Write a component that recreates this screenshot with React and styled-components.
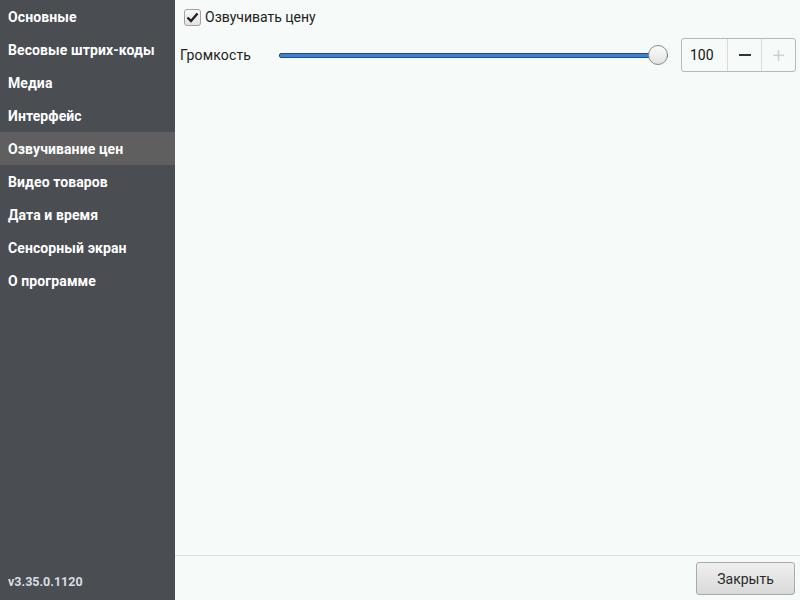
import React from "react";
import styled, { createGlobalStyle } from "styled-components";

const Global = createGlobalStyle`
  html, body { margin: 0; padding: 0; }
  body { font-family: Roboto, "Liberation Sans", sans-serif; }
  #root { width: 800px; height: 600px; }
`;

const Layout = styled.div`
  display: flex;
  width: 800px;
  height: 600px;
  overflow: hidden;
`;

const Sidebar = styled.nav`
  width: 175px;
  flex: none;
  background: #4a4d52;
  display: flex;
  flex-direction: column;
`;

const NavItem = styled.div`
  height: 33px;
  display: flex;
  align-items: center;
  padding-left: 8px;
  color: #ffffff;
  font-weight: 700;
  font-size: 14px;
  letter-spacing: 0.1px;
  background: ${(p) => (p.$active ? "#5f5f5f" : "transparent")};
`;

const Version = styled.div`
  margin-top: auto;
  height: 40px;
  display: flex;
  align-items: center;
  padding-left: 8px;
  padding-top: 2px;
  box-sizing: border-box;
  color: #d8dde2;
  font-weight: 700;
  font-size: 12.5px;
`;

const Main = styled.main`
  flex: 1;
  background: #f6faf8;
  display: flex;
  flex-direction: column;
`;

const Content = styled.div`
  flex: 1;
  padding: 7px 5px 0 5px;
  display: flex;
  flex-direction: column;
`;

const CheckRow = styled.label`
  display: flex;
  align-items: center;
  gap: 4px;
  padding-left: 4px;
  height: 20px;
  font-size: 14px;
  color: #222;
`;

const Box = styled.span`
  width: 15px;
  height: 15px;
  border: 1px solid #a0a0a0;
  border-radius: 3px;
  background: linear-gradient(#fafafa, #e2e2e2);
  display: flex;
  align-items: center;
  justify-content: center;
`;

const VolumeRow = styled.div`
  display: flex;
  align-items: center;
  margin-top: 11px;
  height: 34px;
`;

const Label = styled.span`
  font-size: 14px;
  letter-spacing: 0.15px;
  color: #222;
  width: 99px;
`;

const Slider = styled.div`
  position: relative;
  width: 389px;
  height: 22px;
  display: flex;
  align-items: center;
`;

const Track = styled.div`
  width: 100%;
  height: 3px;
  background: #3d83cf;
  border: 1px solid #1f4f86;
  border-radius: 2px;
`;

const Thumb = styled.div`
  position: absolute;
  right: 0;
  top: 1px;
  width: 18px;
  height: 18px;
  border-radius: 50%;
  border: 1px solid #8a8a8a;
  background: linear-gradient(#fbfbfb, #e2e2e2);
`;

const Spin = styled.div`
  margin-left: 13px;
  display: flex;
  height: 32px;
  border: 1px solid #b8b8b8;
  border-radius: 3px;
  background: #f6faf8;
`;

const SpinValue = styled.div`
  width: 46px;
  display: flex;
  align-items: center;
  padding-left: 8px;
  box-sizing: border-box;
  font-size: 14px;
  color: #111;
  border-right: 1px solid #dcdcdc;
`;

const SpinBtn = styled.div`
  width: 33px;
  display: flex;
  align-items: center;
  justify-content: center;
  border-right: ${(p) => (p.$last ? "none" : "1px solid #dcdcdc")};
`;

const Footer = styled.footer`
  height: 44px;
  border-top: 1px solid #dde0de;
  display: flex;
  align-items: center;
  justify-content: flex-end;
  padding-right: 6px;
`;

const Button = styled.button`
  width: 99px;
  height: 33px;
  border: 1px solid #a9a9a9;
  border-radius: 3px;
  background: linear-gradient(#f0f0f0, #d9d9d9);
  font-family: Roboto, "Liberation Sans", sans-serif;
  font-size: 14px;
  color: #2a2a2a;
  margin-top: 1px;
`;

const items = [
  "Основные",
  "Весовые штрих-коды",
  "Медиа",
  "Интерфейс",
  "Озвучивание цен",
  "Видео товаров",
  "Дата и время",
  "Сенсорный экран",
  "О программе",
];

export default function App() {
  return (
    <>
      <Global />
      <Layout>
        <Sidebar>
          {items.map((t, i) => (
            <NavItem key={t} $active={i === 4}>
              {t}
            </NavItem>
          ))}
          <Version>v3.35.0.1120</Version>
        </Sidebar>
        <Main>
          <Content>
            <CheckRow>
              <Box>
                <svg width="13" height="11" viewBox="0 0 13 11">
                  <path d="M1.5 5.5 L5 9 L11.5 1.5" fill="none" stroke="#222" strokeWidth="2.4" />
                </svg>
              </Box>
              Озвучивать цену
            </CheckRow>
            <VolumeRow>
              <Label>Громкость</Label>
              <Slider>
                <Track />
                <Thumb />
              </Slider>
              <Spin>
                <SpinValue>100</SpinValue>
                <SpinBtn>
                  <svg width="12" height="2" viewBox="0 0 12 2">
                    <rect width="12" height="2" fill="#333" />
                  </svg>
                </SpinBtn>
                <SpinBtn $last>
                  <svg width="11" height="11" viewBox="0 0 11 11">
                    <rect x="0" y="4.5" width="11" height="1.6" fill="#cfd3d1" />
                    <rect x="4.7" y="0" width="1.6" height="11" fill="#cfd3d1" />
                  </svg>
                </SpinBtn>
              </Spin>
            </VolumeRow>
          </Content>
          <Footer>
            <Button>Закрыть</Button>
          </Footer>
        </Main>
      </Layout>
    </>
  );
}
